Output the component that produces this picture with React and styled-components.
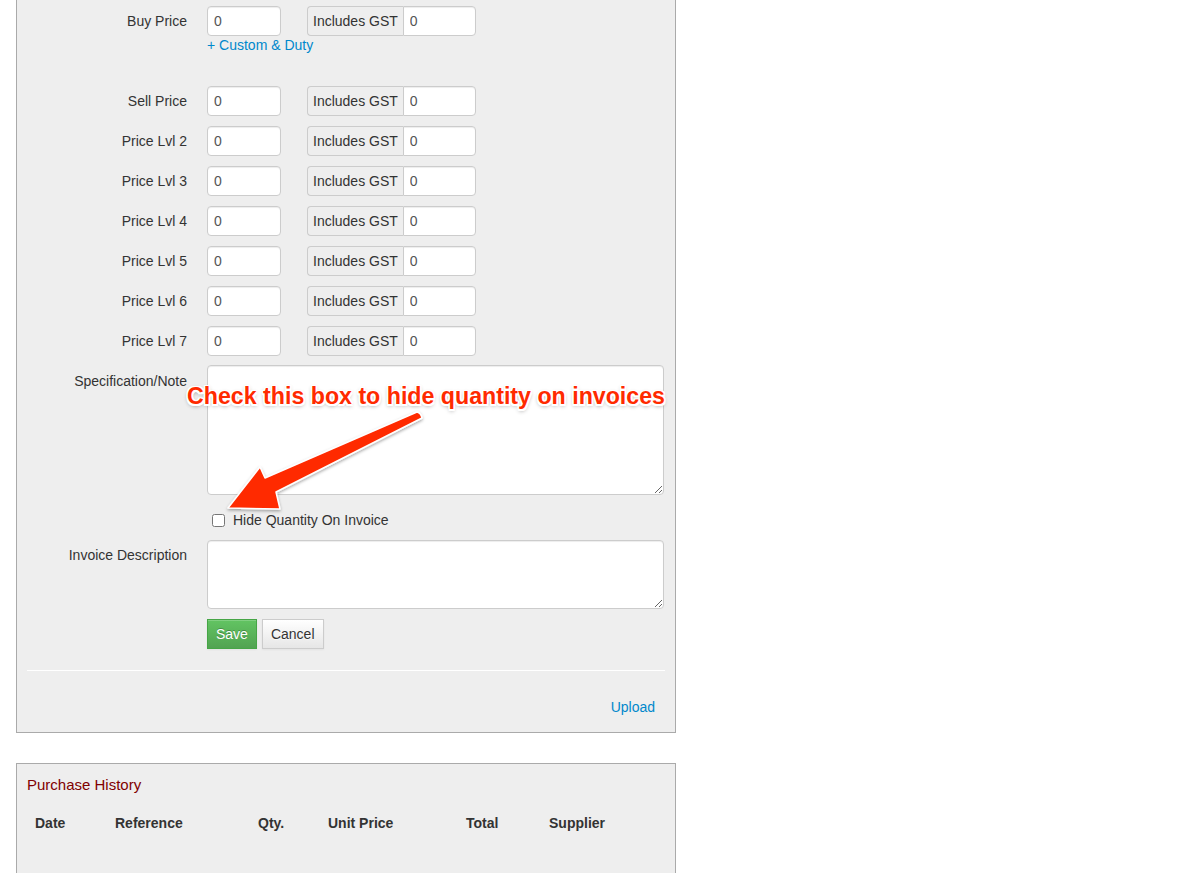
import React from "react";
import styled, { createGlobalStyle } from "styled-components";

const GlobalStyle = createGlobalStyle`
  body {
    margin: 0;
    background: #fff;
    font-family: "Liberation Sans", Arial, sans-serif;
    font-size: 14px;
    color: #333;
  }
`;

const priceRows = ["Sell Price", "Price Lvl 2", "Price Lvl 3", "Price Lvl 4", "Price Lvl 5", "Price Lvl 6", "Price Lvl 7"];

const historyCols = [
  { label: "Date", width: 80 },
  { label: "Reference", width: 143 },
  { label: "Qty.", width: 70 },
  { label: "Unit Price", width: 138 },
  { label: "Total", width: 83 },
  { label: "Supplier", width: 100 },
];

function PriceRow({ label, children }) {
  return (
    <ControlGroup>
      <ControlLabel>{label}</ControlLabel>
      <Controls>
        <InlineFields>
          <MiniInput defaultValue="0" />
          <InputPrepend>
            <AddOn>Includes GST</AddOn>
            <PrependInput defaultValue="0" />
          </InputPrepend>
        </InlineFields>
        {children}
      </Controls>
    </ControlGroup>
  );
}

export default function App() {
  return (
    <Page>
      <GlobalStyle />
      <Panel>
        <Form>
          <PriceRow label="Buy Price">
            <HelpLink href="#">+ Custom &amp; Duty</HelpLink>
          </PriceRow>
          {priceRows.map((r) => (
            <PriceRow key={r} label={r} />
          ))}
          <ControlGroup>
            <ControlLabel>Specification/Note</ControlLabel>
            <Controls>
              <TextArea rows={6} $height={130} $top={-1} />
              <CheckRow>
                <input type="checkbox" />
                Hide Quantity On Invoice
              </CheckRow>
            </Controls>
          </ControlGroup>
          <ControlGroup>
            <ControlLabel>Invoice Description</ControlLabel>
            <Controls>
              <TextArea rows={3} $height={69} />
            </Controls>
          </ControlGroup>
          <ControlGroup>
            <ControlLabel />
            <Controls>
              <ButtonRow>
                <Button $primary>Save</Button>
                <Button>Cancel</Button>
              </ButtonRow>
            </Controls>
          </ControlGroup>
        </Form>
        <Divider />
        <UploadRow>
          <Link href="#">Upload</Link>
        </UploadRow>

        <Annotation>
          <Callout>Check this box to hide quantity on invoices</Callout>
          <ArrowSvg width="250" height="110" viewBox="0 0 250 110">
            <defs>
              <filter id="sh" x="-20%" y="-20%" width="140%" height="140%">
                <feDropShadow dx="0" dy="1.5" stdDeviation="1.5" floodColor="#000" floodOpacity="0.35" />
              </filter>
            </defs>
            <path
              d="M230 2 Q234 3 235 8 L89 82 L93 99 L41 98 L73 57 L78 68 Z"
              fill="#ff2a00"
              stroke="#fff"
              strokeWidth="1.5"
              strokeLinejoin="round"
              filter="url(#sh)"
            />
          </ArrowSvg>
        </Annotation>
      </Panel>

      <HistoryPanel>
        <HistoryTitle>Purchase History</HistoryTitle>
        <HistoryHead>
          {historyCols.map((c) => (
            <HeadCell key={c.label} $w={c.width}>
              {c.label}
            </HeadCell>
          ))}
        </HistoryHead>
      </HistoryPanel>
    </Page>
  );
}

const Page = styled.div`
  width: 660px;
  margin-left: 16px;
  padding-bottom: 40px;
`;

const Panel = styled.div`
  position: relative;
  background: #eee;
  border: 1px solid #aaa;
  border-top: none;
  padding: 6px 10px 15px;
`;

const Form = styled.div`
  display: flex;
  flex-direction: column;
  gap: 10px;
`;

const ControlGroup = styled.div`
  display: flex;
  align-items: flex-start;
`;

const ControlLabel = styled.div`
  width: 160px;
  flex: none;
  text-align: right;
  padding-top: 5px;
  line-height: 20px;
  color: #333;
`;

const Controls = styled.div`
  margin-left: 20px;
  flex: 1;
  display: flex;
  flex-direction: column;
`;

const InlineFields = styled.div`
  display: flex;
  gap: 26px;
`;

const inputBase = `
  box-sizing: border-box;
  height: 30px;
  padding: 4px 6px;
  font-family: "Liberation Sans", Arial, sans-serif;
  font-size: 14px;
  line-height: 20px;
  color: #555;
  background: #fff;
  border: 1px solid #ccc;
  box-shadow: inset 0 1px 1px rgba(0, 0, 0, 0.075);
  outline: none;
`;

const MiniInput = styled.input`
  ${inputBase}
  width: 74px;
  border-radius: 4px;
`;

const InputPrepend = styled.div`
  display: flex;
`;

const AddOn = styled.span`
  box-sizing: border-box;
  height: 30px;
  padding: 4px 5px;
  line-height: 20px;
  background: #eee;
  border: 1px solid #ccc;
  border-right: none;
  border-radius: 4px 0 0 4px;
  color: #333;
  white-space: nowrap;
`;

const PrependInput = styled.input`
  ${inputBase}
  width: 73px;
  border-radius: 0 4px 4px 0;
`;

const HelpLink = styled.a`
  margin-top: -1px;
  margin-bottom: 21px;
  color: #0088cc;
  text-decoration: none;
  line-height: 20px;
`;

const TextArea = styled.textarea`
  ${inputBase}
  width: 457px;
  height: ${(p) => p.$height}px;
  margin-top: ${(p) => p.$top || 0}px;
  border-radius: 4px;
  resize: vertical;
`;

const CheckRow = styled.label`
  display: flex;
  align-items: center;
  gap: 8px;
  margin-top: 15px;
  padding-left: 5px;
  line-height: 20px;
  color: #333;
  input {
    margin: 0;
    width: 13px;
    height: 13px;
  }
`;

const ButtonRow = styled.div`
  display: flex;
  gap: 5px;
`;

const Button = styled.button`
  box-sizing: border-box;
  height: 30px;
  padding: 4px 8px;
  font-family: "Liberation Sans", Arial, sans-serif;
  font-size: 14px;
  line-height: 20px;
  border-radius: 0;
  cursor: pointer;
  color: ${(p) => (p.$primary ? "#fff" : "#333")};
  text-shadow: ${(p) => (p.$primary ? "0 -1px 0 rgba(0,0,0,0.25)" : "0 1px 1px rgba(255,255,255,0.75)")};
  background: ${(p) =>
    p.$primary ? "linear-gradient(#62c462, #51a351)" : "linear-gradient(#fff, #e6e6e6)"};
  border: 1px solid ${(p) => (p.$primary ? "#46a546" : "#ccc")};
  box-shadow: inset 0 1px 0 rgba(255, 255, 255, 0.2), 0 1px 2px rgba(0, 0, 0, 0.05);
`;

const Divider = styled.div`
  margin-top: 21px;
  border-top: 1px solid #fff;
`;

const UploadRow = styled.div`
  display: flex;
  justify-content: flex-end;
  padding: 26px 10px 0;
  line-height: 20px;
`;

const Link = styled.a`
  color: #0088cc;
  text-decoration: none;
`;

const Annotation = styled.div`
  position: absolute;
  left: 170px;
  top: 382px;
  width: 478px;
  pointer-events: none;
`;

const Callout = styled.div`
  font-family: "Liberation Sans", Arial, sans-serif;
  font-weight: bold;
  font-size: 23.2px;
  line-height: 28px;
  color: #ff2a00;
  text-align: right;
  white-space: nowrap;
  text-shadow: -1.5px -1.5px 0 #fff, 1.5px -1.5px 0 #fff, -1.5px 1.5px 0 #fff, 1.5px 1.5px 0 #fff,
    0 -1.5px 0 #fff, 0 1.5px 0 #fff, -1.5px 0 0 #fff, 1.5px 0 0 #fff, 0 2px 4px rgba(0, 0, 0, 0.45);
`;

const ArrowSvg = styled.svg`
  display: block;
`;

const HistoryPanel = styled.div`
  margin-top: 30px;
  background: #eee;
  border: 1px solid #aaa;
  border-bottom: none;
  padding: 11px 10px 40px;
`;

const HistoryTitle = styled.div`
  color: #800000;
  font-size: 15px;
  line-height: 20px;
`;

const HistoryHead = styled.div`
  display: flex;
  margin-top: 18px;
`;

const HeadCell = styled.div`
  width: ${(p) => p.$w}px;
  padding: 0 8px;
  box-sizing: border-box;
  font-weight: bold;
  line-height: 20px;
  color: #333;
`;
